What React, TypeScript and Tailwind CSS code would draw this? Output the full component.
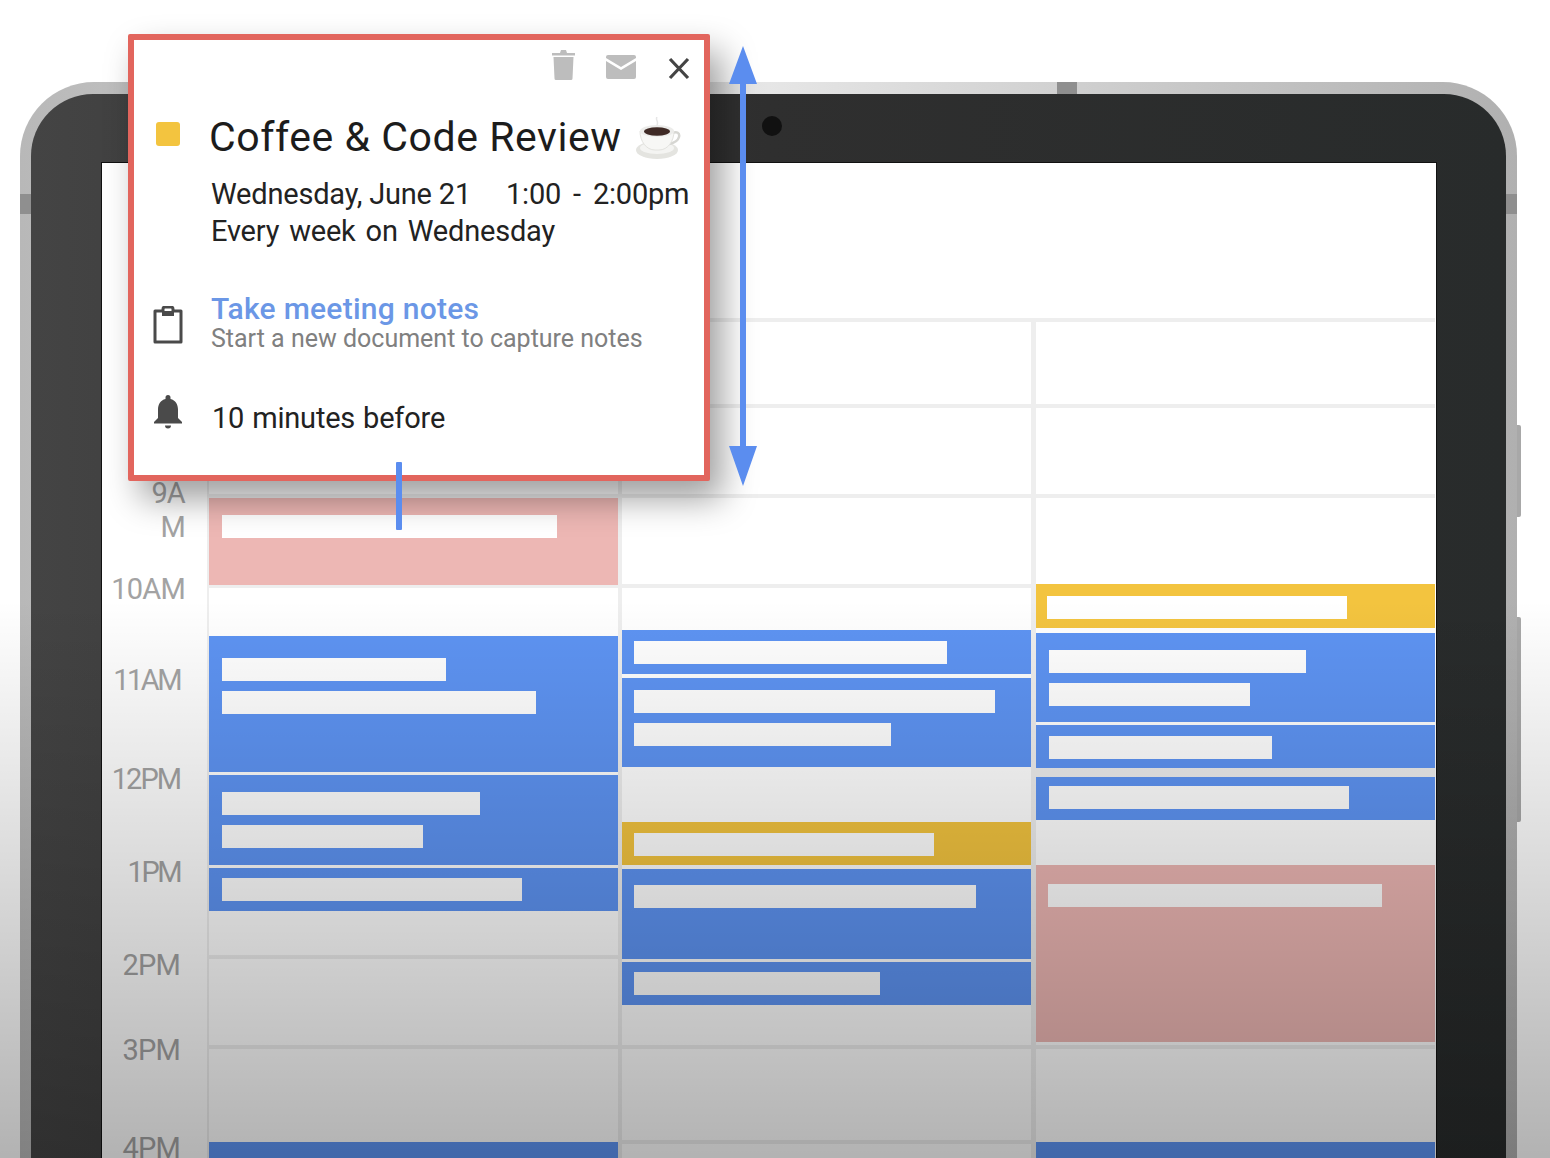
const slotLine = "border-b-4 border-[#eeeeee]";

type Block = {
  box: string;
  bars?: string[];
};

const blue = "bg-[#5e94f3] flex flex-col gap-[10px]";
const pink = "bg-[#edb7b4] flex flex-col";
const yellow = "bg-[#f3c43f] flex flex-col";

const columns: { line: string; blocks: Block[] }[] = [
  {
    line: "border-l-2",
    blocks: [
      { box: `h-[86px] ${slotLine}` },
      { box: `h-[90px] ${slotLine}` },
      { box: `h-[87px] pt-[17px] pl-[13px] ${pink}`, bars: ["w-[335px]"] },
      { box: "h-[51px] border-t-[3px] border-[#eeeeee]" },
      { box: `h-[136px] pt-[22px] pl-[13px] ${blue}`, bars: ["w-[224px]", "w-[314px]"] },
      { box: `mt-[3px] h-[90px] pt-[17px] pl-[13px] ${blue}`, bars: ["w-[258px]", "w-[201px]"] },
      { box: `mt-[3px] h-[43px] pt-[10px] pl-[13px] ${blue}`, bars: ["w-[300px]"] },
      { box: `h-[48px] ${slotLine}` },
      { box: `h-[90px] ${slotLine}` },
      { box: "h-[93px]" },
      { box: "h-[20px] bg-[#5e94f3]" },
    ],
  },
  {
    line: "border-l-4",
    blocks: [
      { box: `h-[86px] ${slotLine}` },
      { box: `h-[90px] ${slotLine}` },
      { box: `h-[90px] ${slotLine}` },
      { box: "h-[42px]" },
      { box: `h-[44px] pt-[11px] pl-[12px] ${blue}`, bars: ["w-[313px]"] },
      { box: `mt-[4px] h-[89px] pt-[12px] pl-[12px] ${blue}`, bars: ["w-[361px]", "w-[257px]"] },
      { box: "h-[55px] pt-[5px]" },
      { box: `h-[43px] pt-[11px] pl-[12px] ${yellow}`, bars: ["w-[300px]"] },
      { box: `mt-[4px] h-[90px] pt-[16px] pl-[12px] ${blue}`, bars: ["w-[342px]"] },
      { box: `mt-[3px] h-[43px] pt-[10px] pl-[12px] ${blue}`, bars: ["w-[246px]"] },
      { box: `h-[44px] ${slotLine}` },
      { box: `h-[95px] ${slotLine}` },
    ],
  },
  {
    line: "border-l-[5px]",
    blocks: [
      { box: `h-[86px] ${slotLine}` },
      { box: `h-[90px] ${slotLine}` },
      { box: "h-[86px]" },
      { box: `h-[44px] pt-[12px] pl-[11px] ${yellow}`, bars: ["w-[300px]"] },
      { box: `mt-[5px] h-[89px] pt-[17px] pl-[13px] ${blue}`, bars: ["w-[257px]", "w-[201px]"] },
      { box: `mt-[3px] h-[43px] pt-[11px] pl-[13px] ${blue}`, bars: ["w-[223px]"] },
      { box: "h-[9px] bg-[#eeeeee]" },
      { box: `h-[43px] pt-[9px] pl-[13px] ${blue}`, bars: ["w-[300px]"] },
      { box: "h-[45px]" },
      { box: `h-[177px] pt-[19px] pl-[12px] ${pink}`, bars: ["w-[334px]"] },
      { box: `h-[7px] ${slotLine}` },
      { box: "h-[93px]" },
      { box: "h-[20px] bg-[#5e94f3]" },
    ],
  },
];

const hours = [
  { label: "10AM", box: "mt-[28px] pr-[22px]" },
  { label: "11AM", box: "mt-[57px] pr-[27px] tracking-[-2.5px]" },
  { label: "12PM", box: "mt-[65px] pr-[27px] tracking-[-2px]" },
  { label: "1PM", box: "mt-[59px] pr-[27px] tracking-[-2.5px]" },
  { label: "2PM", box: "mt-[59px] pr-[27px]" },
  { label: "3PM", box: "mt-[51px] pr-[27px]" },
  { label: "4PM", box: "mt-[64px] pr-[27px]" },
];

function CoffeeCup() {
  return (
    <svg width="48" height="44" viewBox="0 0 48 44" className="shrink-0">
      <ellipse cx="24" cy="33" rx="21" ry="9" fill="#e4e4e0" />
      <ellipse cx="24" cy="31" rx="17" ry="6" fill="#f4f4f2" />
      <path d="M39 16c5-2 8 0 7 4-1 4-5 6-10 7" fill="none" stroke="#d6d6d2" strokeWidth="2.5" />
      <path d="M7 14c0 10 6 19 15 19h4c9 0 15-9 15-19z" fill="#f7f7f5" stroke="#e2e2de" />
      <ellipse cx="24" cy="14" rx="17" ry="6" fill="#ececea" />
      <ellipse cx="24" cy="14.500" rx="13" ry="4.200" fill="#3f2a25" />
      <path d="M24 0c-2 3 2 4 0 8" fill="none" stroke="#e6e6e6" strokeWidth="1.500" />
    </svg>
  );
}

function EventPopup() {
  return (
    <div className="absolute left-[128px] top-[34px] h-[447px] w-[582px] rounded-[2px] border-[6px] border-[#e2655d] bg-white font-['Roboto',sans-serif] shadow-[12px_18px_34px_rgba(0,0,0,0.38)]">
      <div className="flex h-[44px] items-start justify-end pt-[9px] pr-[14px]">
        {/* trash */}
        <svg width="23" height="31" viewBox="0 0 23 31" className="mr-[31px]">
          <path d="M0 4h8l1-3h5l1 3h8v2.500H0zM1.500 8h20l-1 21.500a1.500 1.500 0 0 1-1.500 1.500H4a1.500 1.500 0 0 1-1.500-1.500z" fill="#bdbdbd" />
        </svg>
        {/* mail */}
        <svg width="30" height="24" viewBox="0 0 30 24" className="mr-[32px] mt-[6px]">
          <path d="M2 0h26a2 2 0 0 1 2 2v1L15 12 0 3V2a2 2 0 0 1 2-2zM0 6l15 9 15-9v16a2 2 0 0 1-2 2H2a2 2 0 0 1-2-2z" fill="#bdbdbd" />
        </svg>
        {/* close */}
        <svg width="22" height="23" viewBox="0 0 22 23" className="mt-[8px]">
          <path d="M2 2l18 19M20 2L2 21" stroke="#444444" strokeWidth="3.200" fill="none" />
        </svg>
      </div>
      <div className="mt-[29px] flex h-[48px] items-center pl-[22px]">
        <div className="mb-[6px] h-[24px] w-[24px] rounded-[3px] bg-[#f3c43f]" />
        <span className="ml-[29px] whitespace-nowrap text-[41px] leading-[48px] tracking-[0.55px] text-[#1c1c1c]">Coffee &amp; Code Review</span>
        <div className="ml-[11px] mt-[4px]">
          <CoffeeCup />
        </div>
      </div>
      <div className="mt-[15px] pl-[77px] text-[29px] leading-[37px] tracking-[-0.2px] text-[#222222]">
        <div className="flex">
          <span className="w-[295px]">Wednesday, June 21</span>
          <span className="[word-spacing:5px]">1:00 - 2:00pm</span>
        </div>
        <div className="[word-spacing:3px]">Every week on Wednesday</div>
      </div>
      <div className="mt-[43px] flex pl-[19px]">
        <svg width="30" height="38" viewBox="0 0 30 38" className="mt-[13px] shrink-0">
          <path d="M10 5V3a2 2 0 0 1 2-2h6a2 2 0 0 1 2 2v2h8v31H2V5z" fill="none" stroke="#4a4a4a" strokeWidth="3" strokeLinejoin="round" />
          <path d="M9 5h12v5H9z" fill="#4a4a4a" />
        </svg>
        <div className="ml-[28px]">
          <div className="text-[30px] font-medium leading-[32px] tracking-[0.25px] text-[#6b97e6]">Take meeting notes</div>
          <div className="text-[25px] leading-[28px] text-[#808080]">Start a new document to capture notes</div>
        </div>
      </div>
      <div className="mt-[42px] flex items-center pl-[20px]">
        <svg width="28" height="34" viewBox="0 0 28 34" className="mb-[12px] shrink-0">
          <path d="M14 0a2.500 2.500 0 0 1 2.500 2.500v1.400C21.500 5 24 9.500 24 14.500V23l4 4v1.500H0V27l4-4v-8.500C4 9.500 6.500 5 11.500 3.900V2.500A2.500 2.500 0 0 1 14 0zM11 30.500h6a3 3 0 0 1-6 0z" fill="#4a4a4a" />
        </svg>
        <span className="ml-[30px] text-[29px] leading-[37px] tracking-[-0.2px] text-[#222222] [word-spacing:1px]">10 minutes before</span>
      </div>
      {/* drag handle on the bottom edge */}
      <div className="absolute left-[262px] top-[422px] h-[68px] w-[6px] rounded-[1px] bg-[#5b8def]" />
    </div>
  );
}

function HeightArrow() {
  return (
    <svg width="30" height="440" viewBox="0 0 30 440" className="absolute left-[728px] top-[46px]">
      <path d="M15 0L29 38H1zM15 440L1 400h28z" fill="#5b8def" />
      <path d="M15 30v380" stroke="#5b8def" strokeWidth="6" />
    </svg>
  );
}

export default function App() {
  return (
    <div className="relative h-[1158px] w-[1550px] overflow-hidden bg-white pl-[20px] pt-[82px] font-['Roboto',sans-serif]">
      {/* tablet body */}
      <div className="relative h-[1076px] w-[1497px] rounded-t-[74px] bg-gradient-to-r from-[#b8b8b8] via-[#e6e6e6] to-[#b0b0b0] px-[11px] pt-[12px]">
        <div className="absolute left-[1037px] top-0 h-[12px] w-[20px] bg-[#8f8f8f]" />
        <div className="absolute left-0 top-[112px] h-[20px] w-[11px] bg-[#8f8f8f]" />
        <div className="absolute right-0 top-[112px] h-[20px] w-[11px] bg-[#8f8f8f]" />
        <div className="absolute -right-[4px] top-[343px] h-[92px] w-[4px] rounded-r-[2px] bg-[#a8a8a8]" />
        <div className="absolute -right-[4px] top-[535px] h-[205px] w-[4px] rounded-r-[2px] bg-[#a8a8a8]" />
        <div className="relative h-full rounded-t-[62px] bg-gradient-to-r from-[#444444] via-[#2f2f2f] to-[#282b2b] pl-[71px] pr-[70px] pt-[69px]">
          <div className="absolute left-[731px] top-[22px] h-[20px] w-[20px] rounded-full bg-[#111111]" />
          {/* screen */}
          <div className="h-full bg-white shadow-[0_0_0_1px_#111111]">
            <div className="h-[155px]" />
            <div className="grid grid-cols-[105px_411px_413px_404px]">
              <div className="flex flex-col items-end pt-[158px] text-[29px] leading-[34px] tracking-[-0.8px] text-[#a3a3a3]">
                <div className="pr-[22px] text-right">
                  9A
                  <br />M
                </div>
                {hours.map((hour) => (
                  <div key={hour.label} className={hour.box}>
                    {hour.label}
                  </div>
                ))}
              </div>
              {columns.map((col) => (
                <div key={col.line} className={`${col.line} border-t-4 border-[#eeeeee]`}>
                  {col.blocks.map((block, i) => (
                    <div key={i} className={block.box}>
                      {block.bars?.map((bar) => (
                        <div key={bar} className={`h-[23px] bg-white ${bar}`} />
                      ))}
                    </div>
                  ))}
                </div>
              ))}
            </div>
          </div>
        </div>
      </div>
      {/* the picture fades to grey towards the bottom */}
      <div className="pointer-events-none absolute inset-x-0 bottom-0 top-[600px] bg-gradient-to-b from-transparent to-black/30" />
      <EventPopup />
      <HeightArrow />
    </div>
  );
}
